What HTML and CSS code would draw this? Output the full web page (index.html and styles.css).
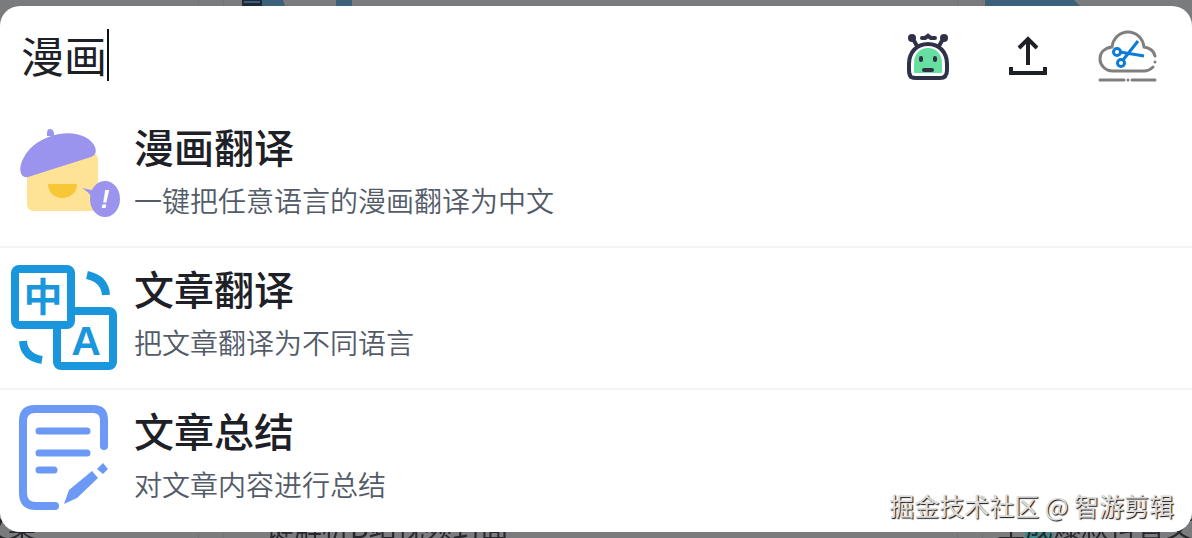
FILE: index.html
```
<!DOCTYPE html>
<html lang="zh-CN">
<head>
    <meta charset="UTF-8">
    <meta name="viewport" content="width=device-width, initial-scale=1.0">
    <title>漫画</title>
    <link rel="stylesheet" href="styles.css">
</head>
<body>

<!-- Dimmed page under the search panel -->
<div class="page" aria-hidden="true">
    <div class="card card-left">
        <p>文案</p>
    </div>
    <div class="card card-middle">
        <svg class="card-art" width="130" height="6" viewBox="0 0 130 6">
            <path d="M19 0h18v6H19z" fill="#3d607a" stroke="#1d2839" stroke-width="2"/>
            <path d="M19 4h18" stroke="#1d2839" stroke-width="2"/>
            <path d="M38 0h21l2 6H38zM112 0h16v6h-16z" fill="#3d607a"/>
        </svg>
        <p>一键解析B站视频封面</p>
    </div>
    <div class="card card-right">
        <svg class="card-art" width="100" height="6" viewBox="0 0 100 6">
            <path d="M2 0h89l6 6H2z" fill="#3d607a"/>
        </svg>
        <p>生<span class="mark">成</span>爆款抖音文案</p>
    </div>
</div>

<main class="panel">
    <div class="search-bar">
        <div class="search-field">
            <input type="text" class="search-input" value="漫画" aria-label="搜索">
            <span class="caret"></span>
        </div>
        <div class="actions">
            <button type="button" class="icon-button" aria-label="机器人">
                <svg width="60" height="60" viewBox="0 0 60 60">
                    <g fill="none" stroke="#2f3148" stroke-width="4" stroke-linecap="round" stroke-linejoin="round">
                        <path d="M13 51q-2-2-2-7v-6C11 26 19 18 30 18s19 8 19 20v6q0 8-7 8H18q-3 0-5-1z"/>
                        <path d="M15 13l4 7M45 13l-4 7"/>
                        <path d="M24 12h3l3-2 3 2h4"/>
                    </g>
                    <circle cx="14" cy="12" r="4" fill="#2f3148"/>
                    <circle cx="46" cy="12" r="4" fill="#2f3148"/>
                    <path d="M30 7l3 4h-6z" fill="#2f3148"/>
                    <path d="M16 46v-9C16 28 22 22 30 22s14 6 14 15v9q0 1-1 1H17q-1 0-1-1z" fill="#66dfa0"/>
                    <rect x="21" y="30" width="4" height="6" rx="2" fill="#2f3148"/>
                    <rect x="35" y="30" width="4" height="6" rx="2" fill="#2f3148"/>
                    <rect x="24" y="42" width="12" height="4" rx="2" fill="#2f3148"/>
                </svg>
            </button>
            <button type="button" class="icon-button" aria-label="上传">
                <svg width="60" height="60" viewBox="0 -1 60 60">
                    <path d="M30 38V12M21 21l9-9 9 9M13 40v6h34v-6" fill="none" stroke="#1d2126" stroke-width="4"/>
                </svg>
            </button>
            <button type="button" class="icon-button" aria-label="云剪辑">
                <svg width="60" height="60" viewBox="0 -2 60 60">
                    <g fill="none" stroke="#7f7f7f" stroke-width="3" stroke-linecap="round">
                        <path d="M57 28c-1-5-5-8-11-9C45 10 38 4 30 4S15 10 14 19C6 20 2 25 2 31s5 12 13 12h31q5 0 9-4"/>
                        <path d="M57 34v.1M2 52h24M34 52h23"/>
                    </g>
                    <circle cx="30" cy="52" r="1.5" fill="#7f7f7f"/>
                    <g fill="none" stroke="#0d7bd8" stroke-width="3">
                        <circle cx="19" cy="24" r="3.5"/>
                        <circle cx="23" cy="35" r="3.5"/>
                        <path d="M22 24l24 4M25 32l15-19"/>
                    </g>
                </svg>
            </button>
        </div>
    </div>

    <ul class="results">
        <li class="result">
            <svg class="result-icon" width="112" height="110" viewBox="-1 -7 112 110">
                <path d="M18 40l66-16q5 3 5 8v45q0 6-6 6H25q-7 0-7-7z" fill="#fee296"/>
                <path d="M38 8V5q0-4 3-4t4 4v3z" fill="#9a94ee"/>
                <path d="M19 49C11 51 9 40 14 31 21 16 36 9 50 6c17-3 32 3 36 13 2 6 0 8-4 10z" fill="#9a94ee"/>
                <path d="M39 56h29c0 18-29 19-29 0z" fill="#f8c735"/>
                <ellipse cx="96" cy="71" rx="15" ry="18" fill="#9a94ee"/>
                <path d="M73 60l14 3-3 8q-4-7-11-11z" fill="#9a94ee"/>
                <text x="96" y="80" class="bubble-mark">!</text>
            </svg>
            <div class="result-text">
                <h2>漫画翻译</h2>
                <p>一键把任意语言的漫画翻译为中文</p>
            </div>
        </li>
        <li class="result">
            <svg class="result-icon" width="112" height="110" viewBox="-1 2 112 110">
                <g fill="none" stroke="#1a97dc" stroke-width="8">
                    <rect x="48" y="50" width="56" height="55" rx="4"/>
                    <path d="M78 14q18 4 19 20M14 80q1 16 19 19"/>
                    <rect x="6" y="8" width="56" height="56" rx="4" fill="#fff"/>
                </g>
                <text x="34" y="50" class="glyph-zh">中</text>
                <text x="77" y="94" class="glyph-a">A</text>
            </svg>
            <div class="result-text">
                <h2>文章翻译</h2>
                <p>把文章翻译为不同语言</p>
            </div>
        </li>
        <li class="result">
            <svg class="result-icon" width="112" height="110" viewBox="-2 5 112 110">
                <g fill="none" stroke="#6b99f5" stroke-width="8" stroke-linecap="round">
                    <path d="M94 46V20Q94 9 83 9H25Q13 9 13 21v72q0 13 13 13h19"/>
                    <path d="M29 31h48M29 53h48M29 70h15" stroke-width="7"/>
                </g>
                <path d="M54 104l5-14 23-19 6 7-21 20z" fill="#6b99f5"/>
                <path d="M87 69l6-6 5 6-5 5z" fill="#6b99f5"/>
            </svg>
            <div class="result-text">
                <h2>文章总结</h2>
                <p>对文章内容进行总结</p>
            </div>
        </li>
    </ul>

    <div class="watermark">掘金技术社区 @ 智游剪辑</div>
</main>

</body>
</html>
```
FILE: styles.css
```
* {
    box-sizing: border-box;
}
body {
    margin: 0;
    min-height: 100vh;
    padding: 6px 0;
    overflow: hidden;
    background-color: #7a7b7d;
    color: #1d2026;
    font-family: "Noto Sans CJK SC", sans-serif;
}
h2, p, ul {
    margin: 0;
    padding: 0;
}

/* Page under the panel */
.page {
    position: fixed;
    inset: 0;
    display: grid;
    grid-template-columns: 199px 1fr 210px;
    gap: 24px;
    overflow: hidden;
}
.card {
    display: flex;
    flex-direction: column;
    justify-content: space-between;
    min-width: 0;
    border: 0 solid #727375;
    border-width: 0 1px;
}
.card p {
    margin-top: auto;
    margin-bottom: -8px;
    padding-left: 14px;
    font-size: 28px;
    line-height: 40px;
    color: #26282c;
    white-space: nowrap;
}
.card-left {
    border-left: none;
}
.card-left p {
    margin-left: -34px;
}
.card-right {
    border-right: none;
}
.mark {
    background-color: #3f8486;
}

/* Search panel */
.panel {
    position: relative;
    background-color: #fff;
    border-radius: 20px;
}
.search-bar {
    display: flex;
    align-items: center;
    height: 100px;
    padding: 0 34px 0 21px;
}
.search-field {
    position: relative;
    flex: 1;
}
.search-input {
    display: block;
    width: 100%;
    height: 60px;
    padding: 0 0 4px;
    border: none;
    outline: none;
    background: none;
    color: #1d2026;
    font-family: inherit;
    font-size: 43px;
}
.caret {
    position: absolute;
    top: 3px;
    left: 86px;
    width: 2px;
    height: 52px;
    background-color: #111;
}
.actions {
    display: flex;
    gap: 40px;
}
.icon-button {
    width: 60px;
    height: 60px;
    padding: 0;
    border: none;
    background: none;
    cursor: pointer;
}
.icon-button svg {
    display: block;
}

/* Results */
.results {
    list-style: none;
}
.result {
    display: flex;
    align-items: center;
    gap: 14px;
    height: 142px;
    padding: 0 8px;
    border-bottom: 2px solid #f2f3f4;
}
.result:last-child {
    border-color: transparent;
}
.result-icon {
    flex: none;
}
.result-text {
    padding-bottom: 12px;
}
.result h2 {
    font-size: 40px;
    font-weight: 500;
    line-height: 60px;
}
.result p {
    font-size: 28px;
    font-weight: 350;
    line-height: 48px;
    color: #535b69;
}
.bubble-mark {
    fill: #fff;
    font-family: "Liberation Sans", sans-serif;
    font-size: 26px;
    font-weight: bold;
    font-style: italic;
    text-anchor: middle;
}
.glyph-zh {
    fill: #1a97dc;
    font-size: 39px;
    font-weight: bold;
    text-anchor: middle;
}
.glyph-a {
    fill: #1a97dc;
    font-family: "Liberation Sans", sans-serif;
    font-size: 41px;
    font-weight: bold;
    text-anchor: middle;
}

.watermark {
    position: absolute;
    right: 18px;
    bottom: 9px;
    color: #ddd;
    font-size: 25px;
    line-height: 36px;
    text-shadow: 1px 1px 1px #111;
}
```
